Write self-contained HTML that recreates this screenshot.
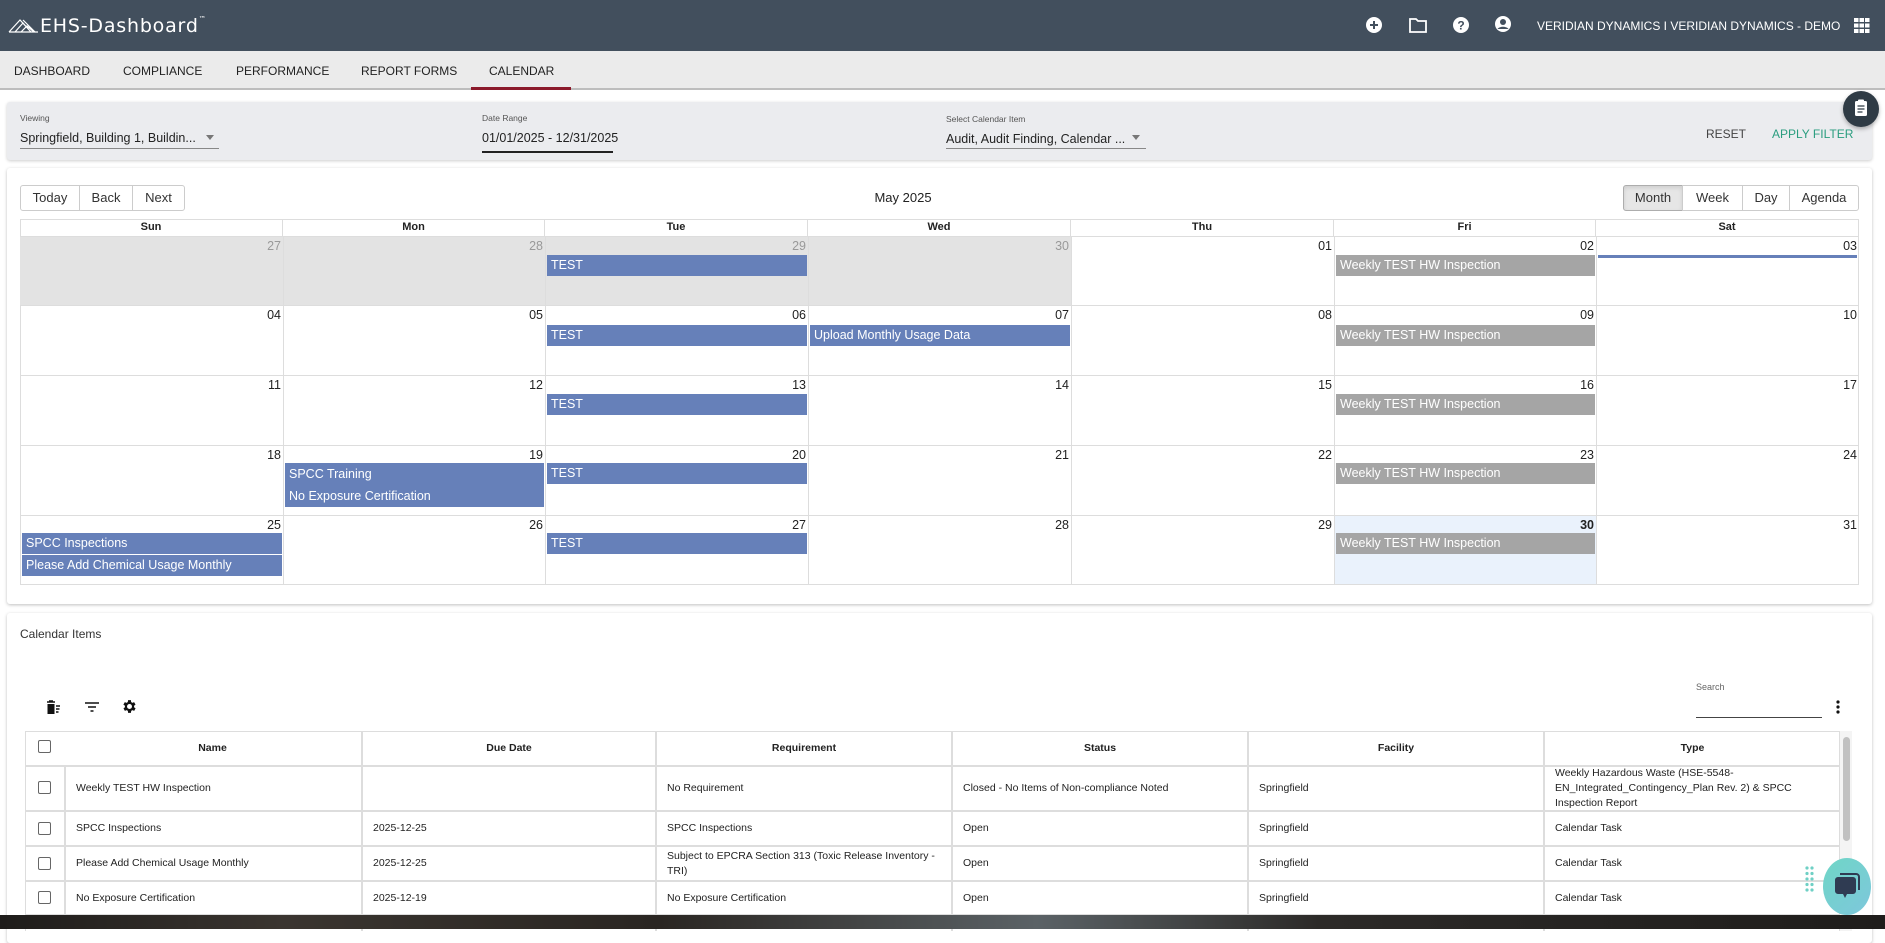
<!DOCTYPE html>
<html><head><meta charset="utf-8"><style>
*{box-sizing:border-box;margin:0;padding:0}
body{width:1885px;height:929px;overflow:hidden;background:#fff;font-family:"Liberation Sans",Arial,sans-serif;color:#222;position:relative}
.a{position:absolute}
.hdr{left:0;top:0;width:1885px;height:51px;background:#424f5d}
.nav{left:0;top:51px;width:1885px;height:39px;background:#ebebeb;border-bottom:2px solid #bdbdbd}
.nav span{position:absolute;top:13px;font-size:12px;color:#222}
.panel{left:7px;top:102px;width:1865px;height:58px;background:#ebecef;border-radius:3px;box-shadow:0 1px 3px rgba(0,0,0,.2)}
.lbl{font-size:8.5px;color:#555}
.val{font-size:12.5px;color:#222}
.card{background:#fff;box-shadow:0 1px 3px rgba(0,0,0,.25);border-radius:3px}
.btn{position:absolute;top:185px;height:26px;border:1px solid #ccc;font-size:13px;color:#333;text-align:center;line-height:24px;background:#fff}
.grid .c{position:absolute;border-right:1px solid #ddd;border-bottom:1px solid #ddd}
.nums{position:absolute;left:0;top:0;width:1885px;height:929px}
.num{position:absolute;font-size:12.5px;color:#222}
.ev{position:absolute;height:21px;color:#fff;font-size:12.5px;line-height:20px;padding-left:4px;background:#6680b9;white-space:nowrap;overflow:hidden}
.ev.g{background:#a5a5a5}
.th{position:absolute;top:732px;height:33px;font-size:10.5px;font-weight:bold;text-align:center;line-height:33px}
.td{position:absolute;font-size:10.5px;color:#222;display:flex;align-items:center;padding-left:10px;line-height:17px}
.cb{position:absolute;width:13px;height:13px;border:1.5px solid #666;border-radius:2px;background:#fff}
</style></head><body>
<div class="a hdr"></div>
<svg class="a" style="left:8px;top:17px" width="36" height="16" viewBox="0 0 36 16"><g fill="none" stroke="#fff" stroke-width="1.2"><path d="M1 15 L12 3 L23 15 M7 15 L15 6 L23 15 M13 15 L19 9 L26 15 M15 3 L27 15 M1 15 H30"/></g></svg>
<div class="a" style="left:40px;top:15px;font-size:19px;color:#fff;letter-spacing:0.8px;font-family:'DejaVu Sans',sans-serif">EHS-Dashboard<sup style="font-size:7px;vertical-align:top">™</sup></div>
<svg class="a" style="left:1365px;top:16px" width="18" height="18" viewBox="0 0 18 18"><circle cx="9" cy="9" r="8" fill="#fff"/><path d="M9 5v8M5 9h8" stroke="#424f5d" stroke-width="2"/></svg>
<svg class="a" style="left:1408px;top:16px" width="20" height="18" viewBox="0 0 20 18"><path d="M2 3h6l2 2h8v11H2z" fill="none" stroke="#fff" stroke-width="1.8"/></svg>
<svg class="a" style="left:1452px;top:16px" width="18" height="18" viewBox="0 0 18 18"><circle cx="9" cy="9" r="8" fill="#fff"/><text x="9" y="13.5" font-size="12" font-weight="bold" text-anchor="middle" fill="#424f5d" font-family="Liberation Sans">?</text></svg>
<svg class="a" style="left:1494px;top:15px" width="18" height="19" viewBox="0 0 18 19"><circle cx="9" cy="9" r="8" fill="#fff"/><circle cx="9" cy="7" r="3" fill="#424f5d"/><path d="M3.5 14c2-3 9-3 11 0" fill="#424f5d"/></svg>
<div class="a" style="left:1537px;top:19px;font-size:12px;color:#fff;white-space:nowrap">VERIDIAN DYNAMICS I VERIDIAN DYNAMICS - DEMO</div>
<svg class="a" style="left:1854px;top:18px" width="16" height="15" viewBox="0 0 16 15"><g fill="#fff"><rect x="0" y="0" width="4.5" height="4"/><rect x="5.5" y="0" width="4.5" height="4"/><rect x="11" y="0" width="4.5" height="4"/><rect x="0" y="5.5" width="4.5" height="4"/><rect x="5.5" y="5.5" width="4.5" height="4"/><rect x="11" y="5.5" width="4.5" height="4"/><rect x="0" y="11" width="4.5" height="4"/><rect x="5.5" y="11" width="4.5" height="4"/><rect x="11" y="11" width="4.5" height="4"/></g></svg>

<div class="a nav">
<span style="left:14px">DASHBOARD</span><span style="left:123px">COMPLIANCE</span><span style="left:236px">PERFORMANCE</span><span style="left:361px">REPORT FORMS</span><span style="left:489px">CALENDAR</span>
</div>
<div class="a" style="left:471px;top:87px;width:100px;height:3px;background:#8b1a2b"></div>

<div class="a panel"></div>
<div class="a lbl" style="left:20px;top:113px">Viewing</div>
<div class="a val" style="left:20px;top:131px">Springfield, Building 1, Buildin...</div>
<div class="a" style="left:206px;top:135px;border:4px solid transparent;border-top:5px solid #777"></div>
<div class="a" style="left:20px;top:148px;width:199px;height:1px;background:#888"></div>
<div class="a lbl" style="left:482px;top:113px">Date Range</div>
<div class="a val" style="left:482px;top:131px">01/01/2025 - 12/31/2025</div>
<div class="a" style="left:482px;top:151px;width:131px;height:1.5px;background:#222"></div>
<div class="a lbl" style="left:946px;top:114px">Select Calendar Item</div>
<div class="a val" style="left:946px;top:132px">Audit, Audit Finding, Calendar ...</div>
<div class="a" style="left:1132px;top:135px;border:4px solid transparent;border-top:5px solid #777"></div>
<div class="a" style="left:946px;top:148px;width:200px;height:1px;background:#888"></div>
<div class="a" style="left:1706px;top:127px;font-size:12px;color:#444">RESET</div>
<div class="a" style="left:1772px;top:127px;font-size:12px;color:#2a9d7f">APPLY FILTER</div>
<div class="a" style="left:1843px;top:91px;width:36px;height:36px;border-radius:50%;background:#2f3b45;box-shadow:0 2px 4px rgba(0,0,0,.3)"></div>
<svg class="a" style="left:1854px;top:99px" width="14" height="18" viewBox="0 0 14 18"><rect x="1" y="2" width="12" height="15" rx="1.5" fill="#fff"/><rect x="4" y="0.5" width="6" height="3" rx="1" fill="#fff"/><path d="M3.5 7h7M3.5 10h7M3.5 13h5" stroke="#2f3b45" stroke-width="1.3"/></svg>

<div class="a card" style="left:7px;top:168px;width:1865px;height:436px"></div>
<div class="btn" style="left:20px;width:60px;border-radius:3px 0 0 3px">Today</div>
<div class="btn" style="left:79px;width:54px;border-left:1px solid #ccc">Back</div>
<div class="btn" style="left:132px;width:53px;border-radius:0 3px 3px 0">Next</div>
<div class="a" style="left:840px;top:190px;width:126px;text-align:center;font-size:13px">May 2025</div>
<div class="btn" style="left:1623px;width:60px;background:#e6e6e6;border-color:#adadad;border-radius:3px 0 0 3px;box-shadow:inset 0 2px 4px rgba(0,0,0,.1)">Month</div>
<div class="btn" style="left:1682px;width:61px">Week</div>
<div class="btn" style="left:1742px;width:48px">Day</div>
<div class="btn" style="left:1789px;width:70px;border-radius:0 3px 3px 0">Agenda</div>

<div class="a grid" style="left:0;top:0">
<div class="a" style="left:20px;top:219px;width:1839px;height:366px;border:1px solid #ddd;border-right:none;border-bottom:none"></div>
<div class="c" style="left:20px;top:219px;width:263px;height:18px;font-size:11px;font-weight:bold;text-align:center;line-height:17px">Sun</div>
<div class="c" style="left:283px;top:219px;width:262px;height:18px;font-size:11px;font-weight:bold;text-align:center;line-height:17px">Mon</div>
<div class="c" style="left:545px;top:219px;width:263px;height:18px;font-size:11px;font-weight:bold;text-align:center;line-height:17px">Tue</div>
<div class="c" style="left:808px;top:219px;width:263px;height:18px;font-size:11px;font-weight:bold;text-align:center;line-height:17px">Wed</div>
<div class="c" style="left:1071px;top:219px;width:263px;height:18px;font-size:11px;font-weight:bold;text-align:center;line-height:17px">Thu</div>
<div class="c" style="left:1334px;top:219px;width:262px;height:18px;font-size:11px;font-weight:bold;text-align:center;line-height:17px">Fri</div>
<div class="c" style="left:1596px;top:219px;width:263px;height:18px;font-size:11px;font-weight:bold;text-align:center;line-height:17px">Sat</div>
</div>

<div class="a" style="left:20px;top:237px;width:1051px;height:69px;background:#e3e3e3"></div>
<div class="a" style="left:1334px;top:515px;width:262px;height:70px;background:#eaf2fc"></div>
<div class="a" style="left:283px;top:237px;width:1px;height:348px;background:#ddd"></div>
<div class="a" style="left:545px;top:237px;width:1px;height:348px;background:#ddd"></div>
<div class="a" style="left:808px;top:237px;width:1px;height:348px;background:#ddd"></div>
<div class="a" style="left:1071px;top:237px;width:1px;height:348px;background:#ddd"></div>
<div class="a" style="left:1334px;top:237px;width:1px;height:348px;background:#ddd"></div>
<div class="a" style="left:1596px;top:237px;width:1px;height:348px;background:#ddd"></div>
<div class="a" style="left:1858px;top:219px;width:1px;height:366px;background:#ddd"></div>
<div class="a" style="left:20px;top:236px;width:1839px;height:1px;background:#ddd"></div>
<div class="a" style="left:20px;top:305px;width:1839px;height:1px;background:#ddd"></div>
<div class="a" style="left:20px;top:375px;width:1839px;height:1px;background:#ddd"></div>
<div class="a" style="left:20px;top:445px;width:1839px;height:1px;background:#ddd"></div>
<div class="a" style="left:20px;top:515px;width:1839px;height:1px;background:#ddd"></div>
<div class="a" style="left:20px;top:584px;width:1839px;height:1px;background:#ddd"></div>

<div class="nums">
<div class="num" style="right:1604px;top:239px;color:#999">27</div>
<div class="num" style="right:1342px;top:239px;color:#999">28</div>
<div class="num" style="right:1079px;top:239px;color:#999">29</div>
<div class="num" style="right:816px;top:239px;color:#999">30</div>
<div class="num" style="right:553px;top:239px">01</div>
<div class="num" style="right:291px;top:239px">02</div>
<div class="num" style="right:28px;top:239px">03</div>
<div class="num" style="right:1604px;top:308px">04</div>
<div class="num" style="right:1342px;top:308px">05</div>
<div class="num" style="right:1079px;top:308px">06</div>
<div class="num" style="right:816px;top:308px">07</div>
<div class="num" style="right:553px;top:308px">08</div>
<div class="num" style="right:291px;top:308px">09</div>
<div class="num" style="right:28px;top:308px">10</div>
<div class="num" style="right:1604px;top:378px">11</div>
<div class="num" style="right:1342px;top:378px">12</div>
<div class="num" style="right:1079px;top:378px">13</div>
<div class="num" style="right:816px;top:378px">14</div>
<div class="num" style="right:553px;top:378px">15</div>
<div class="num" style="right:291px;top:378px">16</div>
<div class="num" style="right:28px;top:378px">17</div>
<div class="num" style="right:1604px;top:448px">18</div>
<div class="num" style="right:1342px;top:448px">19</div>
<div class="num" style="right:1079px;top:448px">20</div>
<div class="num" style="right:816px;top:448px">21</div>
<div class="num" style="right:553px;top:448px">22</div>
<div class="num" style="right:291px;top:448px">23</div>
<div class="num" style="right:28px;top:448px">24</div>
<div class="num" style="right:1604px;top:518px">25</div>
<div class="num" style="right:1342px;top:518px">26</div>
<div class="num" style="right:1079px;top:518px">27</div>
<div class="num" style="right:816px;top:518px">28</div>
<div class="num" style="right:553px;top:518px">29</div>
<div class="num" style="right:291px;top:518px;font-weight:bold">30</div>
<div class="num" style="right:28px;top:518px">31</div>
</div>

<div class="ev" style="left:547px;top:255px;width:260px">TEST</div>
<div class="ev g" style="left:1336px;top:255px;width:259px">Weekly TEST HW Inspection</div>
<div class="a" style="left:1598px;top:255px;width:259px;height:3px;background:#6680b9"></div>
<div class="ev" style="left:547px;top:325px;width:260px">TEST</div>
<div class="ev" style="left:810px;top:325px;width:260px">Upload Monthly Usage Data</div>
<div class="ev g" style="left:1336px;top:325px;width:259px">Weekly TEST HW Inspection</div>
<div class="ev" style="left:547px;top:394px;width:260px">TEST</div>
<div class="ev g" style="left:1336px;top:394px;width:259px">Weekly TEST HW Inspection</div>
<div class="ev" style="left:285px;top:463px;width:259px;height:44px;line-height:22px">SPCC Training<br>No Exposure Certification</div>
<div class="ev" style="left:547px;top:463px;width:260px">TEST</div>
<div class="ev g" style="left:1336px;top:463px;width:259px">Weekly TEST HW Inspection</div>
<div class="ev" style="left:22px;top:533px;width:260px">SPCC Inspections</div>
<div class="ev" style="left:22px;top:555px;width:260px">Please Add Chemical Usage Monthly</div>
<div class="ev" style="left:547px;top:533px;width:260px">TEST</div>
<div class="ev g" style="left:1336px;top:533px;width:259px">Weekly TEST HW Inspection</div>

<div class="a card" style="left:7px;top:613px;width:1865px;height:330px"></div>
<div class="a" style="left:20px;top:627px;font-size:12px;color:#333">Calendar Items</div>
<svg class="a" style="left:45px;top:699px" width="16" height="16" viewBox="0 0 16 16"><path d="M2 3h8M4 2h4" stroke="#111" stroke-width="1.5"/><rect x="2.5" y="5" width="7" height="10" fill="#111"/><path d="M11 7h4M11 10h3.5M11 13h2.5" stroke="#111" stroke-width="1.4"/></svg>
<svg class="a" style="left:84px;top:700px" width="16" height="14" viewBox="0 0 16 14"><path d="M1 3h14M4 7h8M6.5 11h3" stroke="#111" stroke-width="1.6"/></svg>
<svg class="a" style="left:121px;top:698px" width="17" height="17" viewBox="0 0 24 24"><path fill="#111" d="M19.4 13a7.5 7.5 0 0 0 0-2l2.1-1.6-2-3.5-2.5 1a7 7 0 0 0-1.7-1L15 3h-4l-.4 2.9a7 7 0 0 0-1.7 1l-2.5-1-2 3.5L6.6 11a7.5 7.5 0 0 0 0 2l-2.1 1.6 2 3.5 2.5-1a7 7 0 0 0 1.7 1L11 21h4l.4-2.9a7 7 0 0 0 1.7-1l2.5 1 2-3.5zM13 15.5a3.5 3.5 0 1 1 0-7 3.5 3.5 0 0 1 0 7z" transform="translate(-1 0)"/></svg>
<div class="a" style="left:1696px;top:682px;font-size:9px;color:#666">Search</div>
<div class="a" style="left:1696px;top:717px;width:126px;height:1px;background:#444"></div>
<svg class="a" style="left:1836px;top:700px" width="4" height="14" viewBox="0 0 4 14"><g fill="#111"><circle cx="2" cy="2" r="1.6"/><circle cx="2" cy="7" r="1.6"/><circle cx="2" cy="12" r="1.6"/></g></svg>

<div class="a" style="left:25px;top:731px;width:1815px;height:200px;border:1px solid #ddd;border-bottom:none"></div>
<div class="a" style="left:25px;top:765px;width:1815px;height:2px;background:#ddd"></div>
<div class="a" style="left:25px;top:810px;width:1815px;height:2px;background:#ddd"></div>
<div class="a" style="left:25px;top:845px;width:1815px;height:2px;background:#ddd"></div>
<div class="a" style="left:25px;top:880px;width:1815px;height:2px;background:#ddd"></div>
<div class="a" style="left:25px;top:914px;width:1815px;height:2px;background:#ddd"></div>
<div class="a" style="left:64px;top:767px;width:2px;height:160px;background:#ddd"></div>
<div class="a" style="left:361px;top:731px;width:2px;height:200px;background:#ddd"></div>
<div class="a" style="left:655px;top:731px;width:2px;height:200px;background:#ddd"></div>
<div class="a" style="left:951px;top:731px;width:2px;height:200px;background:#ddd"></div>
<div class="a" style="left:1247px;top:731px;width:2px;height:200px;background:#ddd"></div>
<div class="a" style="left:1543px;top:731px;width:2px;height:200px;background:#ddd"></div>
<div class="a" style="left:1840px;top:731px;width:12px;height:200px;background:#f4f4f4"></div>
<div class="a" style="left:1843px;top:737px;width:7px;height:104px;background:#c1c1c1;border-radius:4px"></div>

<div class="cb" style="left:38px;top:740px"></div>
<div class="th" style="left:64px;width:297px">Name</div>
<div class="th" style="left:363px;width:292px">Due Date</div>
<div class="th" style="left:657px;width:294px">Requirement</div>
<div class="th" style="left:953px;width:294px">Status</div>
<div class="th" style="left:1249px;width:294px">Facility</div>
<div class="th" style="left:1545px;width:295px">Type</div>

<div class="cb" style="left:38px;top:781px"></div>
<div class="td" style="left:66px;top:767px;height:43px">Weekly TEST HW Inspection</div>
<div class="td" style="left:657px;top:767px;height:43px">No Requirement</div>
<div class="td" style="left:953px;top:767px;height:43px">Closed - No Items of Non-compliance Noted</div>
<div class="td" style="left:1249px;top:767px;height:43px">Springfield</div>
<div class="td" style="left:1545px;top:767px;height:43px;width:285px;line-height:15px">Weekly Hazardous Waste (HSE-5548-EN_Integrated_Contingency_Plan Rev. 2) &amp; SPCC Inspection Report</div>

<div class="cb" style="left:38px;top:822px"></div>
<div class="td" style="left:66px;top:812px;height:33px">SPCC Inspections</div>
<div class="td" style="left:363px;top:812px;height:33px">2025-12-25</div>
<div class="td" style="left:657px;top:812px;height:33px">SPCC Inspections</div>
<div class="td" style="left:953px;top:812px;height:33px">Open</div>
<div class="td" style="left:1249px;top:812px;height:33px">Springfield</div>
<div class="td" style="left:1545px;top:812px;height:33px">Calendar Task</div>

<div class="cb" style="left:38px;top:857px"></div>
<div class="td" style="left:66px;top:847px;height:33px">Please Add Chemical Usage Monthly</div>
<div class="td" style="left:363px;top:847px;height:33px">2025-12-25</div>
<div class="td" style="left:657px;top:847px;height:33px;width:294px;line-height:15px">Subject to EPCRA Section 313 (Toxic Release Inventory - TRI)</div>
<div class="td" style="left:953px;top:847px;height:33px">Open</div>
<div class="td" style="left:1249px;top:847px;height:33px">Springfield</div>
<div class="td" style="left:1545px;top:847px;height:33px">Calendar Task</div>

<div class="cb" style="left:38px;top:891px"></div>
<div class="td" style="left:66px;top:882px;height:32px">No Exposure Certification</div>
<div class="td" style="left:363px;top:882px;height:32px">2025-12-19</div>
<div class="td" style="left:657px;top:882px;height:32px">No Exposure Certification</div>
<div class="td" style="left:953px;top:882px;height:32px">Open</div>
<div class="td" style="left:1249px;top:882px;height:32px">Springfield</div>
<div class="td" style="left:1545px;top:882px;height:32px">Calendar Task</div>

<div class="a" style="left:0;top:915px;width:1885px;height:14px;background:linear-gradient(90deg,#1e1c1a 0%,#3a3530 15%,#2a2622 35%,#5b6266 55%,#2c2a28 70%,#1f1d1b 100%)"></div>

<svg class="a" style="left:1805px;top:866px" width="10" height="28" viewBox="0 0 10 28"><g fill="#6fd0c5"><circle cx="2" cy="2" r="1.6"/><circle cx="7" cy="2" r="1.6"/><circle cx="2" cy="7.5" r="1.6"/><circle cx="7" cy="7.5" r="1.6"/><circle cx="2" cy="13" r="1.6"/><circle cx="7" cy="13" r="1.6"/><circle cx="2" cy="18.5" r="1.6"/><circle cx="7" cy="18.5" r="1.6"/><circle cx="2" cy="24" r="1.6"/><circle cx="7" cy="24" r="1.6"/></g></svg>
<div class="a" style="left:1823px;top:858px;width:48px;height:57px;border-radius:50%;background:linear-gradient(135deg,#6fd6c6,#7ec7dc)"></div>
<svg class="a" style="left:1834px;top:872px" width="26" height="28" viewBox="0 0 26 28"><path d="M6 2h16a3 3 0 0 1 3 3v13" fill="none" stroke="#2f3b52" stroke-width="2"/><path d="M4 5h15a3 3 0 0 1 3 3v11a3 3 0 0 1-3 3h-6l-2 4-2-4H4a3 3 0 0 1-3-3V8a3 3 0 0 1 3-3z" fill="#2f3b52"/></svg>
</body></html>
